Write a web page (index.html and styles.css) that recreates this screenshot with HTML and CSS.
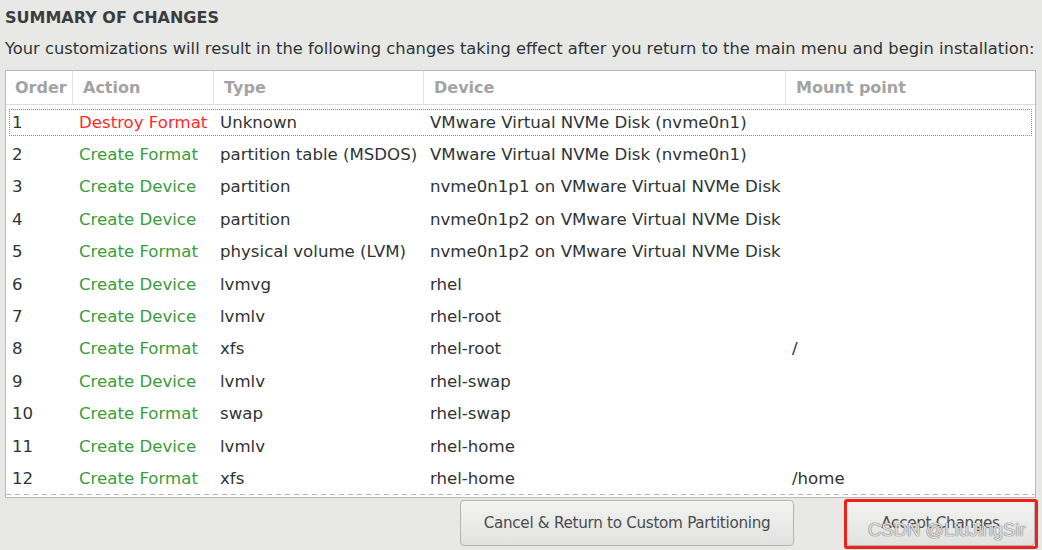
FILE: index.html
```html
<!DOCTYPE html>
<html lang="en">
<head>
<meta charset="utf-8">
<title>Summary of Changes</title>
<link rel="stylesheet" href="styles.css">
</head>
<body>
<main class="page">
  <h1 class="title">SUMMARY OF CHANGES</h1>
  <p class="subtitle">Your customizations will result in the following changes taking effect after you return to the main menu and begin installation:</p>
  <div class="table">
    <div class="row head">
      <div class="cell">Order</div>
      <div class="cell sep">Action</div>
      <div class="cell sep">Type</div>
      <div class="cell sep">Device</div>
      <div class="cell sep">Mount point</div>
    </div>
    <div class="body">
      <div class="row focus"><div class="cell">1</div><div class="cell destroy">Destroy Format</div><div class="cell">Unknown</div><div class="cell">VMware Virtual NVMe Disk (nvme0n1)</div><div class="cell"></div></div>
      <div class="row"><div class="cell">2</div><div class="cell create">Create Format</div><div class="cell">partition table (MSDOS)</div><div class="cell">VMware Virtual NVMe Disk (nvme0n1)</div><div class="cell"></div></div>
      <div class="row"><div class="cell">3</div><div class="cell create">Create Device</div><div class="cell">partition</div><div class="cell">nvme0n1p1 on VMware Virtual NVMe Disk</div><div class="cell"></div></div>
      <div class="row"><div class="cell">4</div><div class="cell create">Create Device</div><div class="cell">partition</div><div class="cell">nvme0n1p2 on VMware Virtual NVMe Disk</div><div class="cell"></div></div>
      <div class="row"><div class="cell">5</div><div class="cell create">Create Format</div><div class="cell">physical volume (LVM)</div><div class="cell">nvme0n1p2 on VMware Virtual NVMe Disk</div><div class="cell"></div></div>
      <div class="row"><div class="cell">6</div><div class="cell create">Create Device</div><div class="cell">lvmvg</div><div class="cell">rhel</div><div class="cell"></div></div>
      <div class="row"><div class="cell">7</div><div class="cell create">Create Device</div><div class="cell">lvmlv</div><div class="cell">rhel-root</div><div class="cell"></div></div>
      <div class="row"><div class="cell">8</div><div class="cell create">Create Format</div><div class="cell">xfs</div><div class="cell">rhel-root</div><div class="cell">/</div></div>
      <div class="row"><div class="cell">9</div><div class="cell create">Create Device</div><div class="cell">lvmlv</div><div class="cell">rhel-swap</div><div class="cell"></div></div>
      <div class="row"><div class="cell">10</div><div class="cell create">Create Format</div><div class="cell">swap</div><div class="cell">rhel-swap</div><div class="cell"></div></div>
      <div class="row"><div class="cell">11</div><div class="cell create">Create Device</div><div class="cell">lvmlv</div><div class="cell">rhel-home</div><div class="cell"></div></div>
      <div class="row"><div class="cell">12</div><div class="cell create">Create Format</div><div class="cell">xfs</div><div class="cell">rhel-home</div><div class="cell">/home</div></div>
    </div>
  </div>
  <div class="actions">
    <button class="btn cancel">Cancel &amp; Return to Custom Partitioning</button>
    <div class="accept-wrap">
      <button class="btn accept">Accept Changes</button>
      <span class="highlight"></span>
      <span class="watermark">CSDN @LiuJingSir</span>
    </div>
  </div>
</main>
</body>
</html>
```

FILE: styles.css
```css
* { box-sizing: border-box; }

html, body {
  margin: 0;
  padding: 0;
  background: #e8e8e7;
}

body {
  font-family: "DejaVu Sans", "Liberation Sans", sans-serif;
  font-size: 16px;
  color: #2e3436;
  width: 1042px;
  height: 550px;
  overflow: hidden;
}

.page {
  padding: 8px 6px 0 5px;
}

.title {
  margin: 0;
  font-size: 16px;
  font-weight: bold;
  line-height: 20px;
  color: #3a3d3e;
}

.subtitle {
  margin: 11px 0 0;
  font-size: 16.3px;
  line-height: 20px;
  white-space: nowrap;
}

.table {
  margin-top: 11px;
  width: 1031px;
  background: #fff;
  border: 1px solid #b9b9b8;
}

.row {
  display: grid;
  grid-template-columns: 66px 141px 210px 362px 1fr;
  align-items: center;
  height: 32.4px;
}

.row .cell {
  padding-left: 7px;
  white-space: nowrap;
}

.row .cell:first-child { padding-left: 6px; }

.head {
  height: 34px;
  border-bottom: 1px solid #dcdcdc;
  align-items: stretch;
  color: #a3a3a3;
  font-weight: bold;
}

.head .cell {
  display: flex;
  align-items: center;
  padding-left: 10px;
}

.head .cell:first-child { padding-left: 9px; }

.head .sep { border-left: 1px solid #e1e1e1; }

.body {
  padding-top: 1px;
  padding-bottom: 2px;
  position: relative;
  font-size: 16.6px;
}

.body::after {
  content: "";
  position: absolute;
  left: 0;
  right: 0;
  bottom: 2px;
  height: 1px;
  background: repeating-linear-gradient(90deg, #b7b7b7 0 5px, transparent 5px 9px);
}

.body .row {
  position: relative;
}

.focus::before {
  content: "";
  position: absolute;
  left: 3px;
  right: 3px;
  top: 3px;
  bottom: 2px;
  border: 1px dotted #8a8a8a;
}

.destroy { color: #ff2a2a; }
.create { color: #3a9c3a; }

.actions {
  margin-top: 2px;
  display: flex;
  justify-content: flex-end;
  gap: 52px;
  padding-right: 1px;
}

.btn {
  font-family: inherit;
  font-size: 15.2px;
  letter-spacing: -0.3px;
  color: #4a4d4e;
  height: 46px;
  border: 1px solid #b3b3b2;
  border-radius: 4px;
  background: linear-gradient(#f3f3f2, #e2e2e1);
  box-shadow: inset 0 1px 0 #fafafa;
}

.cancel { width: 334px; }

.accept-wrap {
  position: relative;
}

.accept { width: 189px; }

.highlight {
  position: absolute;
  left: -2px;
  right: -3px;
  top: -1px;
  bottom: -3px;
  border: 3px solid #f0211b;
  border-radius: 3px;
}

.watermark {
  position: absolute;
  left: 22px;
  top: 19px;
  font-family: "Liberation Sans", sans-serif;
  font-size: 18.5px;
  color: rgba(255, 255, 255, 0.8);
  text-shadow: 0 0 1px #666, 0 0 1px #666;
  white-space: nowrap;
}
```
